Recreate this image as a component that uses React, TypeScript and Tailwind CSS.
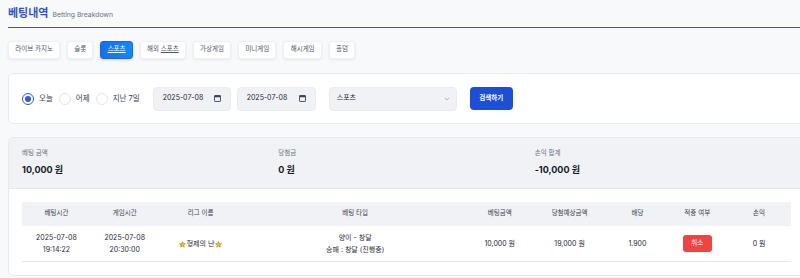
import React from "react";

const tabs = ["라이브 카지노", "슬롯", "스포츠", "해외 스포츠", "가상게임", "미니게임", "해시게임", "홀덤"];

const columns = [
  { label: "베팅시간", w: "w-[69px]" },
  { label: "게임시간", w: "w-[68px]" },
  { label: "리그 이름", w: "w-[84px]" },
  { label: "베팅 타입", w: "w-[226px]" },
  { label: "베팅금액", w: "w-[64px]" },
  { label: "당첨예상금액", w: "w-[76px]" },
  { label: "배당", w: "w-[60px]" },
  { label: "적중 여부", w: "w-[60px]" },
  { label: "손익", w: "w-[64px]" },
];

function Radio({ checked, label }: { checked?: boolean; label: string }) {
  return (
    <label className="flex items-center gap-[5px]">
      <span
        className={
          checked
            ? "flex h-[12px] w-[12px] items-center justify-center rounded-full border border-[#2f5be0] bg-white"
            : "h-[12px] w-[12px] rounded-full border border-[#e3e5ea] bg-white"
        }
      >
        {checked && <span className="h-[6px] w-[6px] rounded-full bg-[#2f5be0]" />}
      </span>
      <span className="text-[7.5px] text-[#374151]">{label}</span>
    </label>
  );
}

function CalendarIcon() {
  return (
    <svg width="7" height="7" viewBox="0 0 8 8" className="text-[#374151]">
      <rect x="0.6" y="0.6" width="6.8" height="6.8" rx="0.6" fill="none" stroke="currentColor" strokeWidth="1" />
      <rect x="0.6" y="0.6" width="6.8" height="2" fill="currentColor" />
    </svg>
  );
}

function DateBox({ value, w }: { value: string; w: string }) {
  return (
    <div className={`flex h-[24px] ${w} items-center justify-between rounded-[4px] border border-[#eaecef] bg-[#f1f2f5] pl-[9px] pr-[9px]`}>
      <span className="text-[7px] text-[#1f2937]">{value}</span>
      <CalendarIcon />
    </div>
  );
}

function Star() {
  return (
    <svg width="7" height="7" viewBox="0 0 24 24">
      <path
        d="M12 2l2.9 6.6 7.1.7-5.4 4.8 1.6 7-6.2-3.7-6.2 3.7 1.6-7L2 9.3l7.1-.7z"
        fill="#f6c21c"
        stroke="#8a6a10"
        strokeWidth="1.6"
        strokeLinejoin="round"
      />
    </svg>
  );
}

export default function App() {
  return (
    <div className="h-[278px] w-[800px] overflow-hidden bg-[#f8f9fb] font-['Inter','Noto_Sans_CJK_KR',sans-serif]">
      <div className="w-[805px] pl-2">
        <div className="flex h-[28px] items-center border-b border-[#3652c6]">
          <div className="flex items-baseline gap-[4px]">
            <h1 className="text-[11px] font-bold text-[#3050d0]">베팅내역</h1>
            <span className="text-[6.8px] text-[#6b7280]">Betting Breakdown</span>
          </div>
        </div>

        <div className="mt-[13px] flex gap-[7px]">
          {tabs.map((t) =>
            t === "스포츠" ? (
              <button
                key={t}
                className="h-[18px] rounded-[3px] border border-[#1a66e0] bg-gradient-to-r from-[#1570f0] to-[#0a8cff] px-[6.2px] text-[6.5px] text-white underline shadow-[0_1px_3px_rgba(0,0,0,0.12)]"
              >
                {t}
              </button>
            ) : (
              <button
                key={t}
                className="h-[18px] rounded-[3px] border border-[#eef0f3] bg-white px-[6.2px] text-[6.5px] text-[#4b5563] shadow-[0_1px_3px_rgba(0,0,0,0.08)]"
              >
                {t === "해외 스포츠" ? (
                  <>
                    해외 <span className="underline">스포츠</span>
                  </>
                ) : (
                  t
                )}
              </button>
            )
          )}
        </div>

        <div className="mt-[14px] flex h-[51px] items-center rounded-[5px] border border-[#e7e9ed] bg-white px-[13px]">
          <div className="flex items-center gap-[6px]">
            <Radio checked label="오늘" />
            <Radio label="어제" />
            <Radio label="지난 7일" />
          </div>
          <div className="ml-[13px] flex items-center gap-[6px]">
            <DateBox value="2025-07-08" w="w-[78px]" />
            <DateBox value="2025-07-08" w="w-[79px]" />
          </div>
          <div className="ml-[13px] flex h-[24px] w-[128px] items-center justify-between rounded-[4px] border border-[#eaecef] bg-[#f1f2f5] pl-[7px] pr-[6px]">
            <span className="text-[7px] text-[#1f2937]">스포츠</span>
            <svg width="6" height="4" viewBox="0 0 6 4">
              <path d="M0.8 0.8L3 3L5.2 0.8" fill="none" stroke="#9ca3af" strokeWidth="0.8" />
            </svg>
          </div>
          <button className="ml-[13px] h-[23px] w-[43px] rounded-[4px] bg-[#1d4ed8] text-[6.5px] font-semibold text-white">
            검색하기
          </button>
        </div>

        <div className="mt-[13px] overflow-hidden rounded-[5px] border border-[#e7e9ed] bg-white">
          <div className="grid h-[51px] grid-cols-3 content-center border-b border-[#e4e7ec] bg-[#f1f2f5] px-[13px]">
            {[
              ["베팅 금액", "10,000 원"],
              ["당첨금", "0 원"],
              ["손익 합계", "-10,000 원"],
            ].map(([l, v]) => (
              <div key={l} className="flex flex-col gap-[4px]">
                <span className="text-[6.5px] text-[#6b7280]">{l}</span>
                <span className="text-[9px] font-bold text-[#111827]">{v}</span>
              </div>
            ))}
          </div>
          <div className="p-[13px]">
            <div className="flex h-[24px] items-center bg-[#f1f2f5]">
              {columns.map((c) => (
                <div key={c.label} className={`${c.w} text-center text-[6.5px] text-[#374151]`}>
                  {c.label}
                </div>
              ))}
            </div>
            <div className="flex h-[36px] items-center border-b border-[#e4e7ec] text-[7px] leading-[11.5px] text-[#1f2937]">
              <div className="w-[69px] text-center">
                2025-07-08
                <br />
                19:14:22
              </div>
              <div className="w-[68px] text-center">
                2025-07-08
                <br />
                20:30:00
              </div>
              <div className="flex w-[84px] items-center justify-center gap-[1px] pt-[1px]">
                <Star />
                <span>형제의 난</span>
                <Star />
              </div>
              <div className="w-[226px] text-center">
                양이 - 창달
                <br />
                승패 : 창달 (진행중)
              </div>
              <div className="w-[64px] text-center">10,000 원</div>
              <div className="w-[76px] text-center">19,000 원</div>
              <div className="w-[60px] text-center">1.900</div>
              <div className="flex w-[60px] justify-center">
                <span className="flex h-[17px] w-[29px] items-center justify-center rounded-[3px] bg-[#ef4444] text-[6.5px] text-white">
                  취소
                </span>
              </div>
              <div className="w-[64px] text-center">0 원</div>
            </div>
          </div>
        </div>
      </div>
    </div>
  );
}
